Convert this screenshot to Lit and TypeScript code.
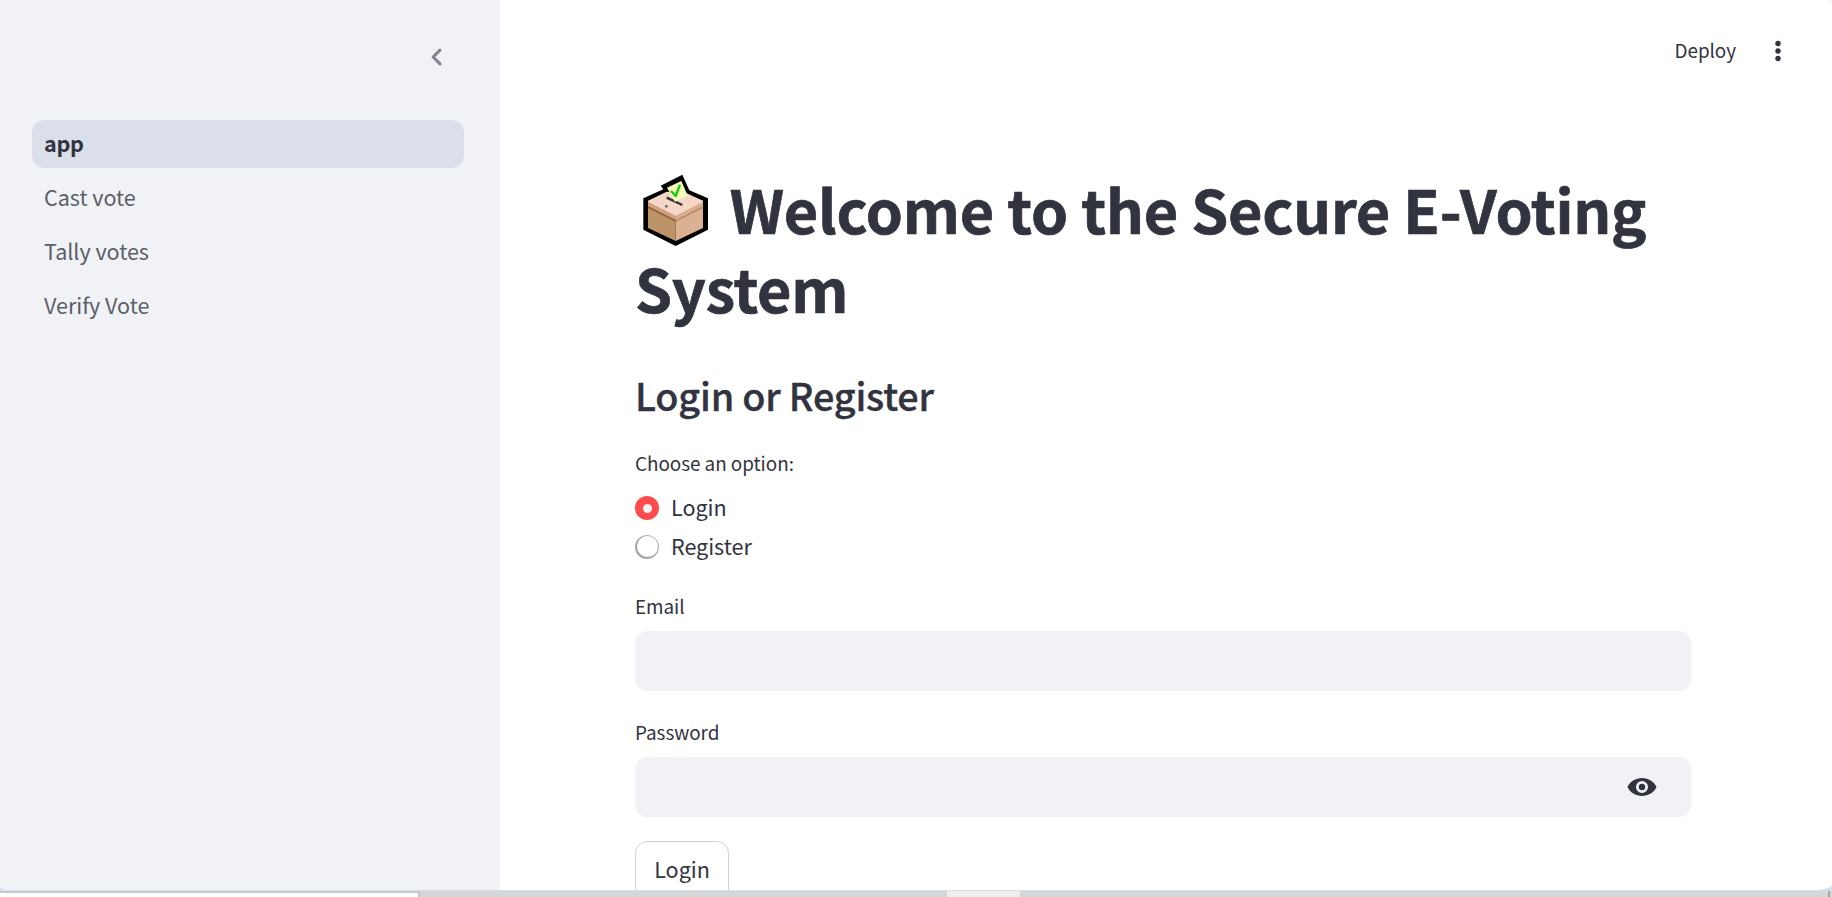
import { LitElement, html, css } from "lit";
import { customElement, state } from "lit/decorators.js";

@customElement("app-root")
export class AppRoot extends LitElement {
  @state() private option = "Login";

  static styles = css`
    :host {
      display: flex;
      flex-direction: column;
      width: 100%;
      height: 897px;
      overflow: hidden;
      box-sizing: border-box;
      background: #d1e0ea;
      color: #31333f;
      font-family: "Noto Sans CJK SC", "Noto Sans", sans-serif;
      font-size: 21.6px;
      line-height: 36px;
      letter-spacing: -0.05px;
    }
    .window {
      display: flex;
      height: 890px;
      flex: none;
      overflow: hidden;
      background: #fff;
      border-radius: 0 2px 16px 8px / 0 2px 6px 4px;
    }
    .sidebar {
      width: 500px;
      flex: none;
      box-sizing: border-box;
      padding: 39px 36px 0 32px;
      background: #f0f2f6;
    }
    .collapse {
      display: flex;
      justify-content: flex-end;
      height: 81px;
      padding-right: 9px;
    }
    .nav {
      display: flex;
      flex-direction: column;
      gap: 6px;
    }
    .link {
      height: 48px;
      box-sizing: border-box;
      padding: 5px 12px;
      border-radius: 12px;
      color: #5c5e68;
    }
    .link.active {
      background: #dadfea;
      color: #31333f;
      font-weight: 700;
      letter-spacing: -0.35px;
    }
    .main {
      flex: 1;
      display: flex;
      flex-direction: column;
    }
    .toolbar {
      display: flex;
      justify-content: flex-end;
      align-items: center;
      height: 102px;
      flex: none;
      box-sizing: border-box;
      padding-right: 36px;
      gap: 24px;
      font-size: 18.9px;
    }
    .deploy {
      padding-bottom: 2px;
    }
    .content {
      margin: 66.6px 141px 0 135px;
    }
    h1,
    h2 {
      margin: 0;
    }
    h1 {
      font-size: 59.4px;
      line-height: 79.2px;
      font-weight: 700;
      white-space: nowrap;
      letter-spacing: -0.24px;
      -webkit-text-stroke: 0.7px #31333f;
    }
    .ballot {
      display: inline-block;
      width: 81.5px;
      height: 76px;
      vertical-align: -12px;
      -webkit-text-stroke: 0;
    }
    h2 {
      margin-top: 43px;
      font-size: 37.8px;
      line-height: 50px;
      font-weight: 500;
      letter-spacing: -0.22px;
      -webkit-text-stroke: 0.35px #31333f;
    }
    .label {
      font-size: 18.9px;
      line-height: 30px;
    }
    .choose {
      margin-top: 28px;
    }
    .radios {
      display: flex;
      flex-direction: column;
      gap: 3px;
      margin-top: 12px;
    }
    .radio {
      display: flex;
      align-items: center;
      gap: 12px;
      height: 36px;
    }
    .name {
      padding-bottom: 2px;
    }
    .dot {
      width: 24px;
      height: 24px;
      box-sizing: border-box;
      border-radius: 50%;
      background: linear-gradient(to top right, #9d9ea4, #b9babe);
      padding: 1px 1px 2px 2px;
      display: flex;
    }
    .dot::after {
      content: "";
      flex: 1;
      border-radius: 50%;
      background: #fff;
    }
    .dot.on {
      background: #ff4b4b;
      padding: 7.5px;
    }
    .dot.on::after {
      background: #f0f2f6;
    }
    .field {
      margin-top: 26px;
    }
    .input {
      display: flex;
      align-items: center;
      justify-content: flex-end;
      height: 60px;
      margin-top: 10px;
      box-sizing: border-box;
      padding-right: 31px;
      border-radius: 12px;
      background: #f0f2f6;
    }
    .button {
      width: 94px;
      height: 60px;
      margin-top: 24px;
      box-sizing: border-box;
      border: 1px solid #d0d1d4;
      border-radius: 12px;
      text-align: center;
      padding-top: 9px;
    }
    .desktop {
      display: flex;
      flex: 1;
      margin-top: 1px;
      background: #d5d6d7;
    }
    .pane {
      width: 418px;
      box-sizing: border-box;
      border-top: 2px solid #c4c9cc;
      background: #fff;
    }
    .edge {
      width: 2px;
      background: #c8c8c8;
    }
    .tab {
      width: 73px;
      margin-left: 527px;
      background: #eee;
    }
    .rail {
      width: 2px;
      margin: 0 2px 0 auto;
      background: #a5a5a5;
    }
    .icon {
      display: block;
      flex: none;
      width: 36px;
      height: 36px;
    }
  `;

  private renderRadio(name: string) {
    return html`<div class="radio" @click=${() => (this.option = name)}>
      <span class="dot ${this.option === name ? "on" : ""}"></span><span class="name">${name}</span>
    </div>`;
  }

  render() {
    return html`
      <div class="window">
        <aside class="sidebar">
          <div class="collapse">
            <svg class="icon" viewBox="0 0 24 24" fill="#82848e">
              <path d="M14.71 6.71a1 1 0 0 0-1.41 0L8.71 11.3a1 1 0 0 0 0 1.41l4.59 4.59a1 1 0 1 0 1.41-1.41L10.83 12l3.88-3.88a1 1 0 0 0 0-1.41z" />
            </svg>
          </div>
          <nav class="nav">
            <div class="link active">app</div>
            <div class="link">Cast vote</div>
            <div class="link">Tally votes</div>
            <div class="link">Verify Vote</div>
          </nav>
        </aside>
        <main class="main">
          <div class="toolbar">
            <span class="deploy">Deploy</span>
            <svg class="icon" viewBox="0 0 36 36" fill="#31333f">
              <circle cx="18" cy="10.5" r="2.7" />
              <circle cx="18" cy="18" r="2.7" />
              <circle cx="18" cy="25.5" r="2.7" />
            </svg>
          </div>
          <div class="content">
            <h1><svg class="ballot" viewBox="45 30 244.5 228">
              <path d="M70 115 130 88 122 77 187 44 208 91 264 115V209L167 258 70 209Z" fill="#000" />
              <path d="M84 124 167 167V243L84 204Z" fill="#bc9268" />
              <path d="M249 124 167 167V243L249 204Z" fill="#dab193" />
              <path d="M84 124 167 167V181L84 138Z" fill="#cfa183" />
              <path d="M249 124 167 167V181L249 138Z" fill="#d9ad90" />
              <path d="M84 141 167 183" stroke="#9a5c36" stroke-width="5" fill="none" />
              <path d="M249 141 167 183" stroke="#bd8b67" stroke-width="5" fill="none" />
              <path d="M84 122 140 95 200 100 249 122V125L167 168 84 125Z" fill="#f6d7c7" />
              <path d="M140 113 187 135" stroke="#333" stroke-width="7" fill="none" />
              <path d="M141 83 184 63 203 107 165 125Z" fill="#f8fcb9" />
              <path d="M155 95 167 108 179 77" stroke="#12cc12" stroke-width="7" stroke-linecap="round" stroke-linejoin="round" fill="none" />
              <circle cx="139" cy="139" r="4.500" fill="#777" />
            </svg> Welcome to the Secure E-Voting<br />System</h1>
            <h2>Login or Register</h2>
            <div class="label choose">Choose an option:</div>
            <div class="radios">${this.renderRadio("Login")}${this.renderRadio("Register")}</div>
            <div class="label field">Email</div>
            <div class="input"></div>
            <div class="label field">Password</div>
            <div class="input">
              <svg class="icon" viewBox="0 0 36 36" fill="#31333f">
                <path fill-rule="evenodd" d="M3.500 18C6 12.500 11.500 9 18 9s12 3.500 14.500 9C30 23.500 24.500 27 18 27S6 23.500 3.500 18zM18 12a6 6 0 1 0 0 12 6 6 0 0 0 0-12zm0 2.800a3.200 3.200 0 1 1 0 6.400 3.200 3.200 0 0 1 0-6.400z" />
              </svg>
            </div>
            <div class="button">Login</div>
          </div>
        </main>
      </div>
      <div class="desktop">
        <div class="pane"></div>
        <div class="edge"></div>
        <div class="tab"></div>
        <div class="rail"></div>
      </div>
    `;
  }
}
